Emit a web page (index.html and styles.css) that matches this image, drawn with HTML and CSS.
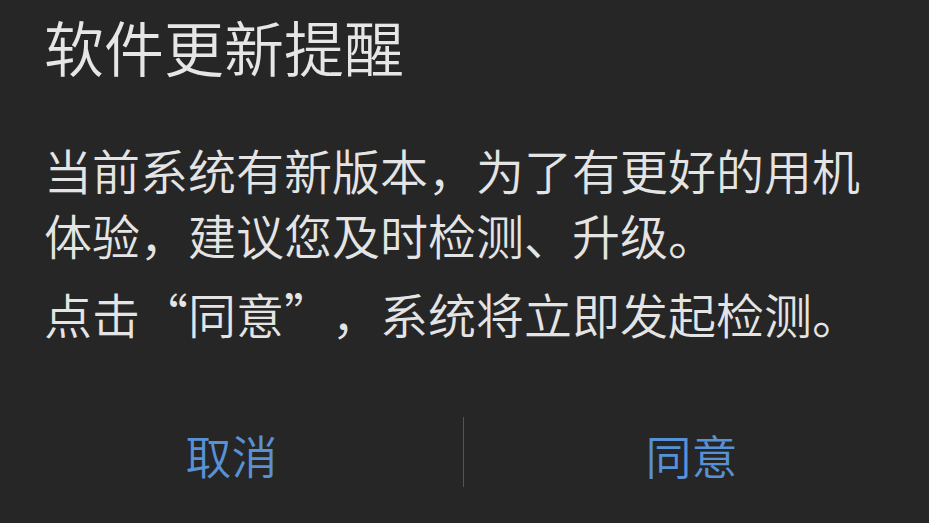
FILE: index.html
```html
<!DOCTYPE html>
<html lang="zh-CN">
<head>
<meta charset="utf-8">
<link rel="stylesheet" href="styles.css">
</head>
<body>
<div class="dialog">
  <h1 class="title">软件更新提醒</h1>
  <div class="content">
    <p class="para">当前系统有新版本，为了有更好的用机体验，建议您及时检测、升级。</p>
    <p class="para para-second">点击<span class="fw fw-open">“</span>同意<span class="fw fw-close">”</span>，系统将立即发起检测。</p>
  </div>
  <div class="actions">
    <div class="btn btn-left">取消</div>
    <div class="divider"></div>
    <div class="btn btn-right">同意</div>
  </div>
</div>
</body>
</html>
```
FILE: styles.css
```css
html, body {
  margin: 0;
  padding: 0;
  background: #262626;
}
body {
  width: 929px;
  height: 523px;
  overflow: hidden;
  font-family: "Noto Sans CJK SC", "Noto Sans", sans-serif;
}
.dialog {
  display: flex;
  flex-direction: column;
}
.title {
  margin: 0;
  padding: 16px 44px 0;
  font-size: 60px;
  line-height: 60px;
  font-weight: 350;
  color: #e6e6e6;
}
.content {
  padding: 61px 44px 0;
}
.para {
  margin: 0;
  font-size: 48px;
  line-height: 65px;
  font-weight: 350;
  color: #e4e4e4;
}
.para-second {
  margin-top: 14px;
}
.fw {
  display: inline-block;
  width: 48px;
}
.fw-open {
  text-align: right;
}
.fw-close {
  text-align: left;
}
.actions {
  display: grid;
  grid-template-columns: 463px 1px 1fr;
  height: 70px;
  margin-top: 71px;
}
.btn {
  display: flex;
  align-items: center;
  justify-content: center;
  padding-top: 4px;
  font-size: 46px;
  font-weight: 350;
  color: #5891d6;
}
.btn-right {
  padding-right: 10px;
}
.divider {
  background: #555555;
}
```
